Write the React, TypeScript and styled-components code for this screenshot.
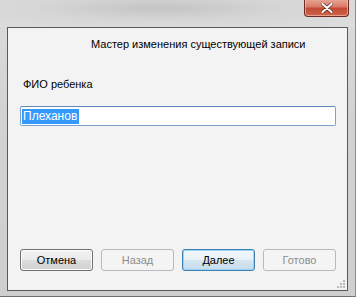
import React from "react"
import styled, { createGlobalStyle } from "styled-components"

const GlobalStyle = createGlobalStyle`
  html, body {
    margin: 0;
    padding: 0;
    width: 356px;
    height: 297px;
    overflow: hidden;
  }
  body {
    font-family: "Liberation Sans", Arial, sans-serif;
    font-size: 11px;
  }
`

// outer aero frame
const Frame = styled.div`
  box-sizing: border-box;
  width: 356px;
  height: 297px;
  display: flex;
  flex-direction: column;
  background: linear-gradient(180deg, #dcdcdc 0%, #d2d2d2 40%, #cfcfcf 100%);
  border-right: 1px solid #8a8a8a;
  border-bottom: 1px solid #6e6e6e;
`

const TitleBar = styled.div`
  height: 27px;
  display: flex;
  justify-content: flex-end;
  align-items: flex-start;
  padding-right: 6px;
  background: radial-gradient(ellipse at 45% 30%, #c4c4c4 0%, #d6d6d6 45%, #dedede 100%);
`

const CloseButton = styled.div`
  box-sizing: border-box;
  width: 45px;
  height: 18px;
  margin-top: -1px;
  display: flex;
  align-items: center;
  justify-content: center;
  border: 1px solid #6b2a22;
  border-top: none;
  border-radius: 0 0 4px 4px;
  background: linear-gradient(180deg, #e9a99a 0%, #d87a67 45%, #c24a33 55%, #d0644c 100%);
  box-shadow: inset 0 0 0 1px rgba(255, 220, 210, 0.5);
`

const Client = styled.div`
  box-sizing: border-box;
  margin: 0 7px 0 7px;
  height: 264px;
  border: 1px solid #5a5a5a;
  background: #f3f3f3;
  display: flex;
  flex-direction: column;
  position: relative;
`

const Title = styled.div`
  padding: 8px 0 0 83px;
  line-height: 16px;
  color: #000;
`

const FieldLabel = styled.div`
  padding: 24px 0 0 15px;
  line-height: 16px;
  color: #000;
`

const InputBox = styled.div`
  box-sizing: border-box;
  margin: 14px 0 0 12px;
  width: 316px;
  height: 20px;
  border: 1px solid #7da2ce;
  border-top-color: #5e89c0;
  border-radius: 2px;
  background: #fff;
  display: flex;
  align-items: center;
  padding-left: 1px;
`

const Selected = styled.span`
  background: #3399ff;
  color: #fff;
  font-size: 12px;
  line-height: 15px;
  padding: 0 2px 0 1px;
`

const ButtonRow = styled.div`
  margin-top: auto;
  margin-bottom: 19px;
  padding-left: 12px;
  display: flex;
  gap: 8px;
`

const Button = styled.div<{ $kind: "normal" | "disabled" | "default" }>`
  box-sizing: border-box;
  width: 73px;
  height: 22px;
  border-radius: 3px;
  display: flex;
  align-items: center;
  justify-content: center;
  border: 1px solid
    ${(p) => (p.$kind === "disabled" ? "#b7babc" : p.$kind === "default" ? "#3c7fb1" : "#707070")};
  color: ${(p) => (p.$kind === "disabled" ? "#8d8d8d" : "#000")};
  background: ${(p) =>
    p.$kind === "disabled"
      ? "#f4f4f4"
      : p.$kind === "default"
      ? "linear-gradient(180deg, #f2f8fc 0%, #e8f1f8 48%, #d5e5f1 52%, #c6dbec 100%)"
      : "linear-gradient(180deg, #f2f2f2 0%, #ebebeb 48%, #dddddd 52%, #cfcfcf 100%)"};
  box-shadow: ${(p) =>
    p.$kind === "default" ? "inset 0 0 0 1px #9ad4f3" : p.$kind === "normal" ? "inset 0 0 0 1px #fcfcfc" : "none"};
`

const Grip = styled.svg`
  position: absolute;
  right: 1px;
  bottom: 1px;
`

const App = () => {
  const dots = [
    [8, 2],
    [5, 5],
    [8, 5],
    [2, 8],
    [5, 8],
    [8, 8],
  ]
  return (
    <>
      <GlobalStyle />
      <Frame>
        <TitleBar>
          <CloseButton>
            <svg width="12" height="10" viewBox="0 0 12 10">
              <path
                d="M1.5 1 L10.5 9 M10.5 1 L1.5 9"
                stroke="#5a2218"
                strokeWidth="3.4"
                strokeLinecap="round"
              />
              <path
                d="M1.5 1 L10.5 9 M10.5 1 L1.5 9"
                stroke="#fff"
                strokeWidth="2.2"
                strokeLinecap="round"
              />
            </svg>
          </CloseButton>
        </TitleBar>
        <Client>
          <Title>Мастер изменения существующей записи</Title>
          <FieldLabel>ФИО ребенка</FieldLabel>
          <InputBox>
            <Selected>Плеханов</Selected>
          </InputBox>
          <ButtonRow>
            <Button $kind="normal">Отмена</Button>
            <Button $kind="disabled">Назад</Button>
            <Button $kind="default">Далее</Button>
            <Button $kind="disabled">Готово</Button>
          </ButtonRow>
          <Grip width="11" height="11" viewBox="0 0 11 11">
            {dots.map(([x, y]) => (
              <rect key={`${x}-${y}`} x={x} y={y} width="2" height="2" fill="#b8b8b8" />
            ))}
          </Grip>
        </Client>
      </Frame>
    </>
  )
}

export default App
